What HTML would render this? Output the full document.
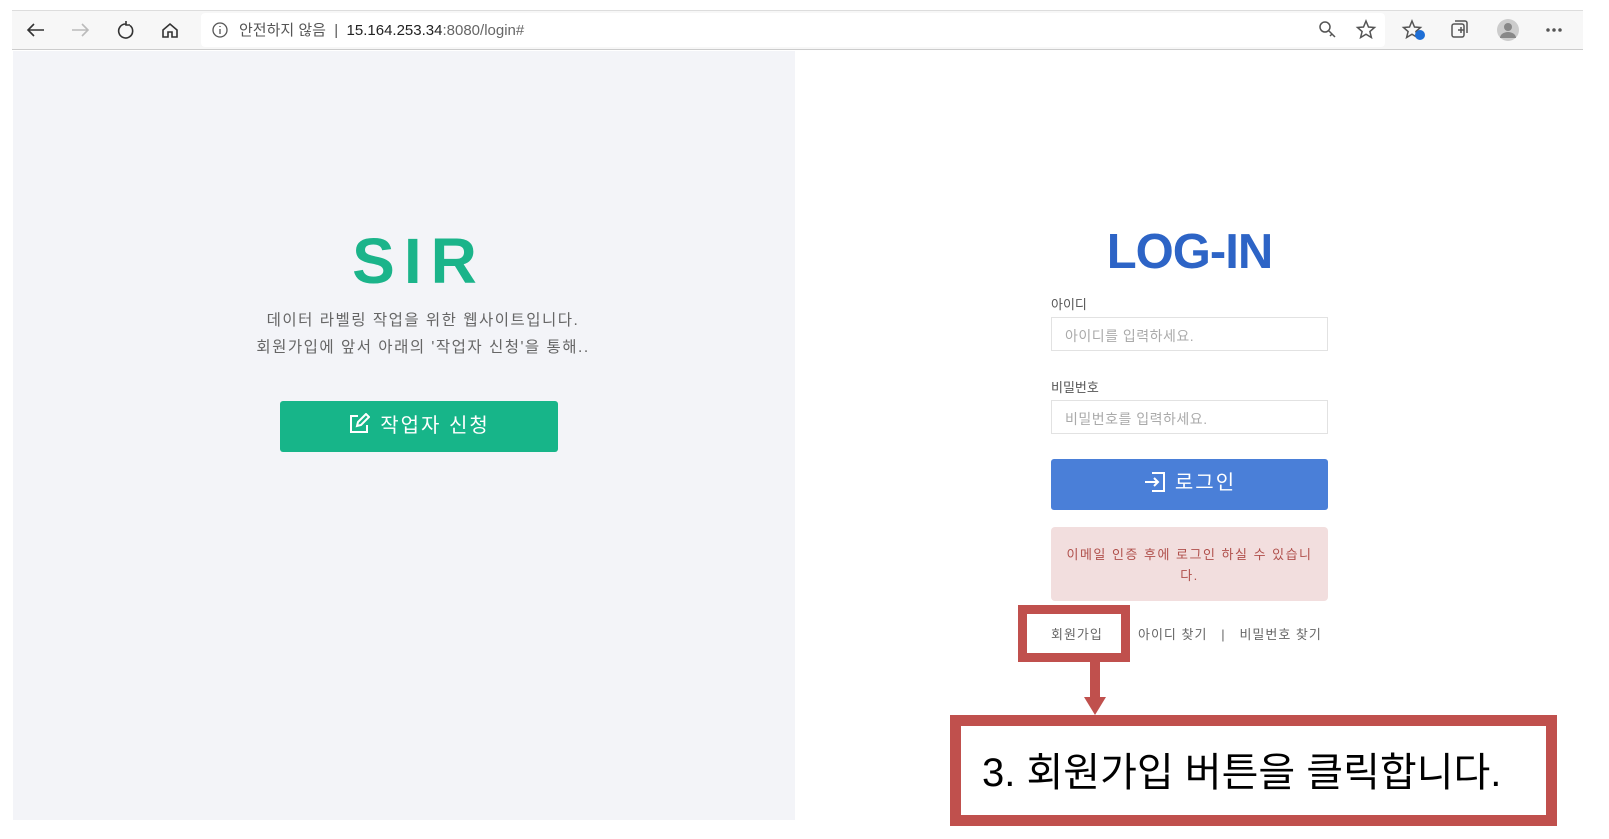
<!DOCTYPE html>
<html><head><meta charset="utf-8"><style>
*{margin:0;padding:0;box-sizing:border-box}
body{width:1609px;height:839px;background:#fff;position:relative;overflow:hidden;font-family:"Liberation Sans","Noto Sans CJK KR",sans-serif}
.a{position:absolute}
.chrome{left:12px;top:10px;width:1571px;height:40px;background:#f7f7f7;border-top:1px solid #ddd;border-bottom:1px solid #ccc}
.url{left:201px;top:13px;width:1184px;height:34px;background:#fff;border-radius:4px}
.left{left:13px;top:51px;width:782px;height:769px;background:#f3f4f8}
.sir{left:13px;width:782px;top:224px;text-align:center;font-size:64px;font-weight:bold;color:#1bb48a;letter-spacing:9px;padding-left:30px}
.desc{left:32px;width:782px;text-align:center;font-size:15.5px;color:#666;letter-spacing:1.5px}
.gbtn{left:280px;top:401px;width:278px;height:51px;background:#17b589;border-radius:3px;color:#fff;font-size:20px;text-align:center;line-height:50px;letter-spacing:2px}
.login{left:1051px;width:277px;top:224px;text-align:center;font-size:49px;font-weight:bold;color:#2d64c6;letter-spacing:-1px}
.lbl{left:1051px;font-size:13px;color:#555}
.inp{left:1051px;width:277px;height:34px;border:1px solid #e2e2e2;background:#fff;font-size:14px;color:#aaa;padding:8px 0 0 13px;letter-spacing:0.5px}
.bbtn{left:1051px;top:459px;width:277px;height:51px;background:#4a7fd8;border-radius:3px;color:#fff;font-size:20px;text-align:center;line-height:48px;letter-spacing:2px}
.alert{left:1051px;top:527px;width:277px;height:74px;background:#f2dede;border-radius:4px;color:#b0504c;font-size:13px;text-align:center;padding:17px 12px 0;line-height:21px;letter-spacing:1.5px}
.links{top:624px;font-size:13px;color:#666;letter-spacing:1px}
</style></head><body>
<div class="a chrome"></div>
<div class="a url"></div>
<svg class="a" style="left:24px;top:18px" width="190" height="24" viewBox="0 0 190 24" fill="none" stroke="#333" stroke-width="1.6">
<path d="M20 12H4M10 6L4 12l6 6"/>
<path d="M64 12H48M58 6l6 6-6 6" stroke="#bbb"/>
<path d="M102 6a7 7 0 1 0 4 1.5M102 3v4h4" />
<path d="M139 19v-7l7-6 7 6v7h-5v-5h-4v5z"/>
</svg>
<svg class="a" style="left:210px;top:20px" width="20" height="20" viewBox="0 0 20 20" fill="none" stroke="#555" stroke-width="1.3"><circle cx="10" cy="10" r="7"/><path d="M10 9v5M10 6v1"/></svg>
<div class="a" style="left:239px;top:19px;font-size:15px;color:#555">안전하지 않음 &nbsp;| &nbsp;<span style="color:#222">15.164.253.34</span><span style="color:#666">:8080/login#</span></div>
<svg class="a" style="left:1315px;top:18px" width="260" height="26" viewBox="0 0 260 26" fill="none" stroke="#555" stroke-width="1.5">
<circle cx="10" cy="9" r="5"/><path d="M14 13l6 6M17 16l-2 2"/>
<path d="M51 3l2.5 6 6 .5-4.6 4 1.5 6-5.4-3.3-5.4 3.3 1.5-6-4.6-4 6-.5z"/>
<path d="M97 3l2.5 6 6 .5-4.6 4 1.5 6-5.4-3.3-5.4 3.3 1.5-6-4.6-4 6-.5z"/>
<circle cx="105" cy="17" r="5" fill="#1f6fd6" stroke="none"/>
<rect x="137" y="6" width="12" height="13" rx="2"/><path d="M140 3h10a2 2 0 0 1 2 2v10M143 12h6M146 9v6"/>
<circle cx="193" cy="12" r="11" fill="#ccc" stroke="none"/><circle cx="193" cy="9" r="4" fill="#888" stroke="none"/><path d="M185 20a8 6 0 0 1 16 0" fill="#888" stroke="none"/>
<circle cx="233" cy="12" r="1" fill="#555"/><circle cx="239" cy="12" r="1" fill="#555"/><circle cx="245" cy="12" r="1" fill="#555"/>
</svg>
<div class="a left"></div>
<div class="a sir">SIR</div>
<div class="a desc" style="top:308px">데이터 라벨링 작업을 위한 웹사이트입니다.</div>
<div class="a desc" style="top:335px">회원가입에 앞서 아래의 '작업자 신청'을 통해..</div>
<div class="a gbtn"><svg width="22" height="22" viewBox="0 0 22 22" fill="none" stroke="#fff" stroke-width="2" style="vertical-align:-3px;margin-right:10px"><path d="M10 3H3v16h16v-7M9 13l1-4 8-8 3 3-8 8z"/></svg>작업자 신청</div>
<div class="a login">LOG-IN</div>
<div class="a lbl" style="top:294px">아이디</div>
<div class="a inp" style="top:317px">아이디를 입력하세요.</div>
<div class="a lbl" style="top:377px">비밀번호</div>
<div class="a inp" style="top:400px">비밀번호를 입력하세요.</div>
<div class="a bbtn"><svg width="24" height="22" viewBox="0 0 24 22" fill="none" stroke="#fff" stroke-width="2" style="vertical-align:-4px;margin-right:8px"><path d="M9 2h12v18H9M2 11h13M11 7l4 4-4 4"/></svg>로그인</div>
<div class="a alert">이메일 인증 후에 로그인 하실 수 있습니다.</div>
<div class="a links" style="left:1051px">회원가입</div>
<div class="a links" style="left:1138px">아이디 찾기 &nbsp;&nbsp;| &nbsp;&nbsp;비밀번호 찾기</div>
<div class="a" style="left:1018px;top:605px;width:112px;height:57px;border:9px solid #c0504d"></div>
<div class="a" style="left:1090px;top:662px;width:10px;height:36px;background:#c0504d"></div>
<svg class="a" style="left:1084px;top:697px" width="22" height="18"><path d="M0 0h22L11 18z" fill="#c0504d"/></svg>
<div class="a" style="left:950px;top:715px;width:607px;height:111px;border:11px solid #c0504d;background:#fff"></div>
<div class="a" style="left:982px;top:740px;font-size:40px;color:#000">3. 회원가입 버튼을 클릭합니다.</div>
</body></html>
